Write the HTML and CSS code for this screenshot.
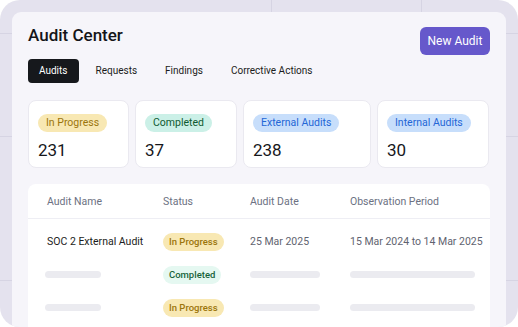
FILE: index.html
```html
<!DOCTYPE html>
<html lang="en">
<head>
    <meta charset="UTF-8">
    <meta name="viewport" content="width=device-width, initial-scale=1.0">
    <title>Audit Center</title>
    <link rel="stylesheet" href="styles.css">
</head>
<body>
    <div class="frame">
        <div class="panel">
            <div class="header">
                <div>
                    <h1>Audit Center</h1>
                    <div class="tabs">
                        <span class="tab active">Audits</span>
                        <span class="tab">Requests</span>
                        <span class="tab">Findings</span>
                        <span class="tab">Corrective Actions</span>
                    </div>
                </div>
                <button class="new-btn">New Audit</button>
            </div>

            <div class="stats">
                <div class="stat">
                    <span class="badge yellow">In Progress</span>
                    <div class="num">231</div>
                </div>
                <div class="stat">
                    <span class="badge green">Completed</span>
                    <div class="num">37</div>
                </div>
                <div class="stat">
                    <span class="badge blue">External Audits</span>
                    <div class="num">238</div>
                </div>
                <div class="stat">
                    <span class="badge blue">Internal Audits</span>
                    <div class="num">30</div>
                </div>
            </div>

            <div class="table">
                <div class="row head">
                    <span>Audit Name</span>
                    <span>Status</span>
                    <span>Audit Date</span>
                    <span>Observation Period</span>
                </div>
                <div class="body">
                    <div class="row">
                        <span class="name">SOC 2 External Audit</span>
                        <span><span class="pill yellow">In Progress</span></span>
                        <span class="muted">25 Mar 2025</span>
                        <span class="muted">15 Mar 2024 to 14 Mar 2025</span>
                    </div>
                    <div class="row">
                        <span><i class="skel s-name"></i></span>
                        <span><span class="pill mint">Completed</span></span>
                        <span><i class="skel s-date"></i></span>
                        <span><i class="skel s-period"></i></span>
                    </div>
                    <div class="row">
                        <span><i class="skel s-name"></i></span>
                        <span><span class="pill yellow">In Progress</span></span>
                        <span><i class="skel s-date"></i></span>
                        <span><i class="skel s-period"></i></span>
                    </div>
                </div>
            </div>
        </div>
    </div>
</body>
</html>
```

FILE: styles.css
```css
body {
    margin: 0;
    background: #ffffff;
    font-family: Roboto, "Noto Sans", sans-serif;
    color: #16171b;
    white-space: nowrap;
}

/* outer lavender frame with faint grid lines behind */
.frame {
    width: 518px;
    height: 327px;
    box-sizing: border-box;
    padding: 12px 12px 0 12px;
    border-radius: 20px;
    overflow: hidden;
    background-color: #e4e2ee;
    background-image:
        linear-gradient(#d6d4e3, #d6d4e3),
        linear-gradient(#d6d4e3, #d6d4e3),
        linear-gradient(#d6d4e3, #d6d4e3),
        linear-gradient(#d6d4e3, #d6d4e3),
        linear-gradient(#d6d4e3, #d6d4e3);
    background-repeat: no-repeat;
    background-size: 518px 1px, 518px 1px, 1px 327px, 1px 327px, 518px 1px;
    background-position: 0 33px, 0 136px, 271px 0, 421px 0, 0 280px;
}

.panel {
    height: 100%;
    box-sizing: border-box;
    background: #f6f5fa;
    border-radius: 9px 9px 0 0;
    padding: 13px 16px 0 16px;
}

.header {
    display: flex;
    justify-content: space-between;
    align-items: flex-start;
}

h1 {
    margin: 0;
    font-size: 17px;
    line-height: 20px;
    font-weight: 500;
    color: #141519;
}

.tabs {
    display: flex;
    gap: 6px;
    margin-top: 14px;
}

.tab {
    height: 24px;
    line-height: 24px;
    padding: 0 11px;
    font-size: 10px;
    border-radius: 4px;
    color: #1b1c20;
}

.tab.active {
    background: #16181c;
    color: #ffffff;
}

.new-btn {
    margin-top: 2px;
    height: 28px;
    width: 70px;
    padding: 0;
    border: none;
    border-radius: 6px;
    background: #6658cb;
    color: #ffffff;
    font-family: inherit;
    font-size: 12px;
    font-weight: 400;
}

.stats {
    display: grid;
    grid-template-columns: 101px 102px 128px 112px;
    gap: 6px;
    margin-top: 17px;
}

.stat {
    height: 68px;
    box-sizing: border-box;
    background: #ffffff;
    border: 1px solid #eae9f0;
    border-radius: 8px;
    padding: 10px 9px 0 9px;
}

.badge {
    display: inline-block;
    height: 18px;
    line-height: 18px;
    padding: 0 8px;
    border-radius: 9px;
    font-size: 10.5px;
    font-weight: 400;
}

.yellow {
    background: #f8e8b3;
    color: #9c760c;
}

.green {
    background: #cbf0e7;
    color: #0f5a31;
}

.blue {
    background: #c7defb;
    color: #2466d6;
}

.mint {
    background: #e5f8f1;
    color: #17643a;
}

.num {
    margin-top: 8px;
    font-size: 17px;
    font-weight: 400;
    line-height: 20px;
}

.table {
    margin-top: 16px;
    background: #ffffff;
    border-radius: 8px 8px 0 0;
    height: 200px;
}

.row {
    display: grid;
    grid-template-columns: 116px 87px 100px 1fr;
    align-items: center;
    padding-left: 19px;
    height: 33px;
    font-size: 10.5px;
}

.row.head {
    height: 34px;
    color: #6c7182;
    border-bottom: 1px solid #eeeef4;
}

.body {
    padding-top: 6px;
}

.name {
    color: #1c1d21;
}

.muted {
    color: #5f6370;
}

.pill {
    display: inline-block;
    height: 18px;
    line-height: 18px;
    padding: 0 6px;
    border-radius: 9px;
    font-size: 9.5px;
    font-weight: 500;
}

.skel {
    display: block;
    height: 7px;
    border-radius: 4px;
    background: #ebebf0;
}

.s-name {
    width: 56px;
    margin-left: -2px;
}

.s-date {
    width: 70px;
}

.s-period {
    width: 125px;
}
```
